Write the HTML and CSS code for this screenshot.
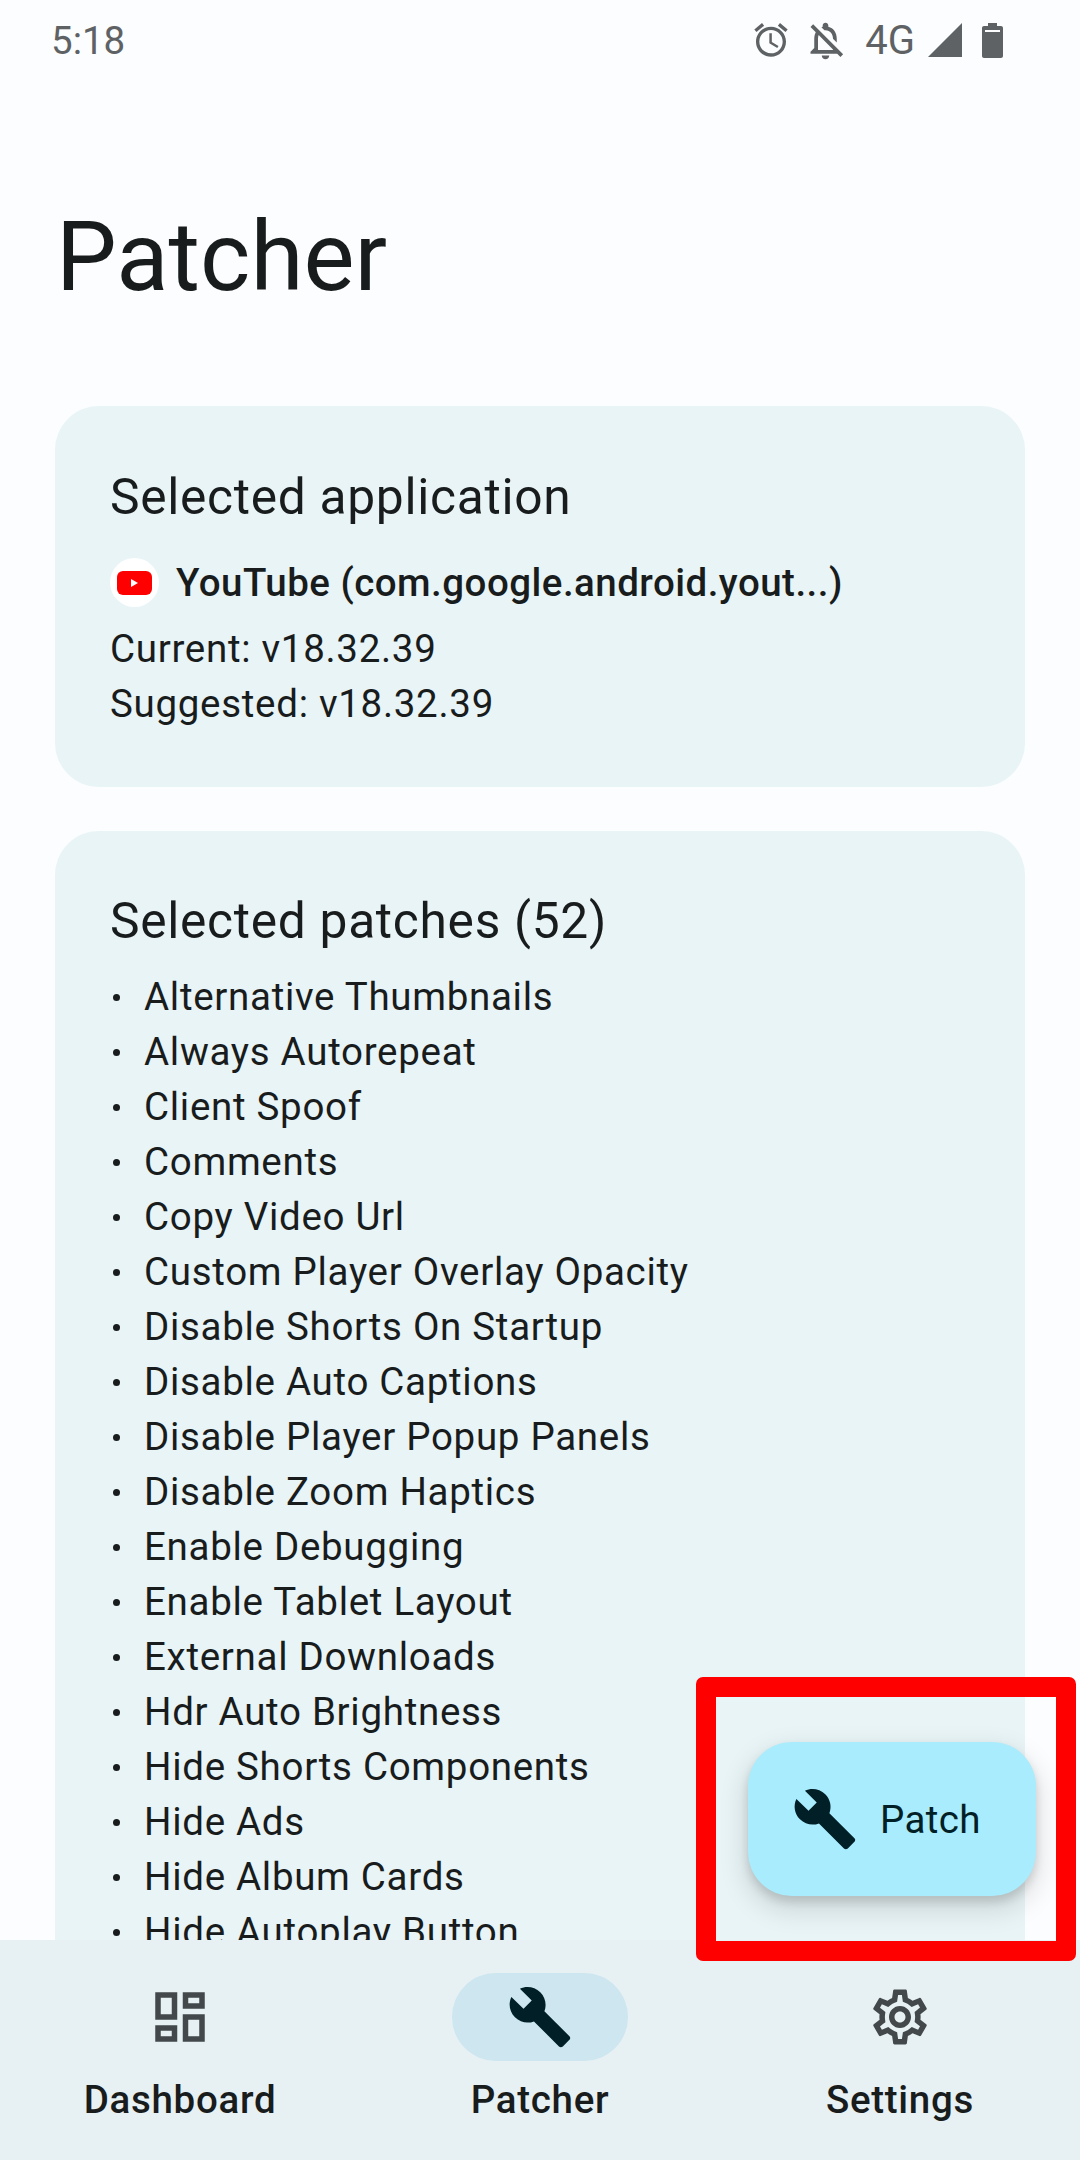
FILE: index.html
```html
<!DOCTYPE html>
<html lang="en">
  <head>
    <meta charset="UTF-8" />
    <meta name="viewport" content="width=device-width, initial-scale=1.0" />
    <title>Patcher</title>
    <link rel="stylesheet" href="styles.css">
  </head>
  <body>
    <div class="app">
      <div class="status-bar">
        <span class="time">5:18</span>
        <div class="status-icons">
          <svg class="icon-alarm" viewBox="0 0 24 24"><path d="M22 5.72l-4.6-3.86-1.29 1.53 4.6 3.86L22 5.72zM7.88 3.39L6.6 1.86 2 5.71l1.29 1.53 4.59-3.85zM12.5 8H11v6l4.75 2.85.75-1.23-4-2.37V8zM12 4c-4.97 0-9 4.03-9 9s4.03 9 9 9 9-4.03 9-9-4.03-9-9-9zm0 16c-3.87 0-7-3.13-7-7s3.13-7 7-7 7 3.13 7 7-3.13 7-7 7z"/></svg>
          <svg class="icon-bell" viewBox="0 0 24 24"><path d="M12 22c1.1 0 2-.9 2-2h-4c0 1.1.9 2 2 2zm0-15.5c2.49 0 4 2.02 4 4.5v.1l2 2V11c0-3.07-1.63-5.64-4.5-6.32V4c0-.83-.67-1.5-1.5-1.5s-1.5.67-1.5 1.5v.68c-.24.06-.47.15-.69.23l1.64 1.64c.18-.02.36-.05.55-.05zM5.41 3.35L4 4.76l2.81 2.81C6.29 8.57 6 9.74 6 11v5l-2 2v1h14.24l1.74 1.74 1.41-1.41L5.41 3.35zM16 17H8v-6c0-.68.12-1.32.34-1.9L16 16.76V17z"/></svg>
          <span class="network">4G</span>
          <svg class="icon-signal" viewBox="0 0 24 24"><path d="M0 24h24V0z"/></svg>
          <svg class="icon-battery" viewBox="0 0 21 35"><path d="M6 0h9v3h4c1.1 0 2 .9 2 2v28c0 1.1-.9 2-2 2H2c-1.100 0-2-.9-2-2V5c0-1.100.9-2 2-2h4z"/><rect class="battery-mark" x="3" y="7" width="15" height="2"/></svg>
        </div>
      </div>

      <main class="content">
        <h1>Patcher</h1>

        <section class="card card-app">
          <h2>Selected application</h2>
          <div class="app-row">
            <span class="app-icon">
              <svg viewBox="0 0 35 24"><rect width="35" height="24" rx="6" fill="#f00"/><path d="M14 8l7 4-7 4z" fill="#fff"/></svg>
            </span>
            <span class="app-name">YouTube (com.google.android.yout...)</span>
          </div>
          <p>Current: v18.32.39</p>
          <p>Suggested: v18.32.39</p>
        </section>

        <section class="card card-patches">
          <h2>Selected patches (52)</h2>
          <ul class="patch-list">
            <li>Alternative Thumbnails</li>
            <li>Always Autorepeat</li>
            <li>Client Spoof</li>
            <li>Comments</li>
            <li>Copy Video Url</li>
            <li>Custom Player Overlay Opacity</li>
            <li>Disable Shorts On Startup</li>
            <li>Disable Auto Captions</li>
            <li>Disable Player Popup Panels</li>
            <li>Disable Zoom Haptics</li>
            <li>Enable Debugging</li>
            <li>Enable Tablet Layout</li>
            <li>External Downloads</li>
            <li>Hdr Auto Brightness</li>
            <li>Hide Shorts Components</li>
            <li>Hide Ads</li>
            <li>Hide Album Cards</li>
            <li>Hide Autoplay Button</li>
          </ul>
        </section>
      </main>

      <nav class="bottom-nav">
        <div class="nav-item">
          <span class="nav-icon">
            <svg viewBox="0 0 24 24"><path d="M19 5v2h-4V5h4M9 5v6H5V5h4m10 8v6h-4v-6h4M9 17v2H5v-2h4M21 3h-8v6h8V3zM11 3H3v10h8V3zm10 8h-8v10h8V11zm-10 4H3v6h8v-6z"/></svg>
          </span>
          <span class="nav-label">Dashboard</span>
        </div>
        <div class="nav-item active">
          <span class="nav-icon">
            <svg viewBox="0 0 24 24"><path d="M22.700 19l-9.100-9.100c.9-2.300.4-5-1.500-6.900-2-2-5-2.400-7.400-1.300L9 6 6 9 1.600 4.700C.4 7.100.9 10.100 2.900 12.100c1.900 1.900 4.600 2.400 6.900 1.500l9.100 9.100c.4.4 1 .4 1.400 0l2.300-2.300c.5-.4.5-1.100.1-1.400z"/></svg>
          </span>
          <span class="nav-label">Patcher</span>
        </div>
        <div class="nav-item">
          <span class="nav-icon">
            <svg viewBox="0 0 24 24"><path d="M19.430 12.980c.04-.32.07-.64.07-.98 0-.34-.03-.66-.07-.98l2.110-1.650c.19-.15.24-.42.12-.64l-2-3.460c-.09-.16-.26-.25-.44-.25-.06 0-.12.01-.17.03l-2.490 1c-.52-.4-1.080-.73-1.690-.98l-.38-2.650C14.460 2.180 14.250 2 14 2h-4c-.25 0-.46.18-.49.42l-.38 2.650c-.61.25-1.170.59-1.690.98l-2.490-1c-.06-.02-.12-.03-.18-.03-.17 0-.34.09-.43.25l-2 3.460c-.13.22-.07.49.12.64l2.110 1.650c-.04.32-.07.65-.07.98 0 .33.03.66.07.98l-2.110 1.650c-.19.15-.24.42-.12.64l2 3.460c.09.16.26.25.44.25.06 0 .12-.01.17-.03l2.490-1c.52.4 1.080.73 1.690.98l.38 2.650c.03.24.24.42.49.42h4c.25 0 .46-.18.49-.42l.38-2.650c.61-.25 1.170-.59 1.690-.98l2.490 1c.06.02.12.03.18.03.17 0 .34-.09.43-.25l2-3.460c.12-.22.07-.49-.12-.64l-2.110-1.650zm-1.980-1.710c.04.31.05.52.05.73 0 .21-.02.43-.05.73l-.14 1.130.89.7 1.080.84-.7 1.210-1.270-.51-1.040-.42-.9.68c-.43.32-.84.56-1.250.73l-1.060.43-.16 1.130-.2 1.350h-1.400l-.19-1.350-.16-1.130-1.060-.43c-.43-.18-.83-.41-1.230-.71l-.91-.7-1.060.43-1.270.51-.7-1.210 1.080-.84.89-.7-.14-1.130c-.03-.31-.05-.54-.05-.74s.02-.43.05-.73l.14-1.130-.89-.7-1.080-.84.7-1.210 1.270.51 1.040.42.9-.68c.43-.32.84-.56 1.250-.73l1.060-.43.16-1.130.2-1.350h1.390l.19 1.350.16 1.130 1.060.43c.43.18.83.41 1.230.71l.91.7 1.060-.43 1.270-.51.7 1.210-1.070.85-.89.7.14 1.130zM12 8c-2.210 0-4 1.790-4 4s1.790 4 4 4 4-1.790 4-4-1.790-4-4-4zm0 6c-1.100 0-2-.9-2-2s.9-2 2-2 2 .9 2 2-.9 2-2 2z"/></svg>
          </span>
          <span class="nav-label">Settings</span>
        </div>
      </nav>

      <button class="fab">
        <svg viewBox="0 0 24 24"><path d="M22.700 19l-9.100-9.100c.9-2.300.4-5-1.500-6.900-2-2-5-2.400-7.400-1.300L9 6 6 9 1.600 4.700C.4 7.100.9 10.100 2.900 12.100c1.900 1.900 4.600 2.400 6.900 1.500l9.100 9.100c.4.4 1 .4 1.400 0l2.300-2.300c.5-.4.5-1.100.1-1.400z"/></svg>
        <span>Patch</span>
      </button>
      <div class="highlight-box"></div>
    </div>
  </body>
</html>
```

FILE: styles.css
```css
body {
  margin: 0;
  font-family: Roboto, "Liberation Sans", sans-serif;
  color: #191c1d;
  background-color: #fbfdfe;
}
.app {
  position: relative;
  display: flex;
  flex-direction: column;
  width: 1080px;
  height: 2160px;
  overflow: hidden;
}
.status-bar {
  display: flex;
  justify-content: space-between;
  align-items: center;
  height: 80px;
  padding: 0 77px 0 51px;
  color: #5f6264;
  flex-shrink: 0;
}
.time {
  font-size: 38.500px;
}
.status-icons {
  display: flex;
  align-items: center;
  color: #5f6264;
}
.status-icons svg {
  fill: currentColor;
  display: block;
}
.icon-alarm {
  width: 40px;
  height: 40px;
}
.icon-bell {
  width: 45px;
  height: 45px;
  margin-left: 12px;
}
.network {
  font-size: 40px;
  font-weight: 400;
  margin-left: 17px;
}
.icon-signal {
  width: 34px;
  height: 34px;
  margin-left: 13px;
}
.icon-battery {
  width: 21px;
  height: 35px;
  margin-left: 20px;
}
.battery-mark {
  fill: #fbfdfe;
}
.content {
  flex: 1;
  min-height: 0;
  overflow: hidden;
  padding: 0 55px;
}
h1 {
  font-size: 96.250px;
  font-weight: 400;
  line-height: 110px;
  margin: 122px 0 0 1px;
}
.card {
  background-color: #e8f4f6;
  border-radius: 44px;
  padding: 55px;
  letter-spacing: 0.7px;
}
.card-app {
  margin-top: 94px;
  height: 381px;
  box-sizing: border-box;
  padding-top: 60px;
}
.card-patches {
  margin-top: 44px;
  padding-top: 60px;
}
h2 {
  font-size: 49.700px;
  font-weight: 400;
  line-height: 60px;
  margin: 0;
}
.card-app h2 {
  position: relative;
  top: 1px;
}
p {
  font-size: 38.500px;
  line-height: 55px;
  margin: 0;
}
.app-row {
  display: flex;
  align-items: center;
  gap: 17px;
  margin: 29px 0 0;
  height: 55px;
}
.app-icon {
  display: flex;
  align-items: center;
  justify-content: center;
  width: 49px;
  height: 49px;
  border-radius: 50%;
  background-color: #fff;
}
.app-icon svg {
  width: 35px;
  height: 24px;
}
.app-name {
  font-size: 38.500px;
  font-weight: 500;
  letter-spacing: 0.47px;
}
.app-row + p {
  margin-top: 11px;
}
.patch-list {
  list-style: none;
  margin: 18px 0 0;
  padding: 0;
}
.patch-list li {
  position: relative;
  font-size: 38.500px;
  line-height: 55px;
  padding-left: 34px;
}
.patch-list li::before {
  content: "";
  position: absolute;
  left: 3px;
  top: 25px;
  width: 7px;
  height: 7px;
  border-radius: 50%;
  background-color: #191c1d;
}
.bottom-nav {
  display: flex;
  height: 220px;
  flex-shrink: 0;
  background-color: #e7f0f3;
  position: relative;
}
.nav-item {
  flex: 1;
  display: flex;
  flex-direction: column;
  align-items: center;
  padding-top: 33px;
}
.nav-icon {
  display: flex;
  align-items: center;
  justify-content: center;
  width: 176px;
  height: 88px;
  border-radius: 44px;
}
.nav-icon svg {
  width: 66px;
  height: 66px;
  fill: #43484a;
}
.active .nav-icon {
  background-color: #cde6ef;
}
.active .nav-icon svg {
  fill: #001f27;
}
.nav-label {
  font-size: 38.500px;
  font-weight: 500;
  letter-spacing: 0.7px;
  line-height: 55px;
  margin-top: 11px;
}
.fab {
  position: absolute;
  left: 748px;
  top: 1742px;
  display: flex;
  align-items: center;
  gap: 22px;
  width: 288px;
  height: 154px;
  padding: 0 0 0 44px;
  border: none;
  border-radius: 44px;
  background-color: #a9ecfd;
  color: #001f27;
  font-family: inherit;
  font-size: 38.500px;
  font-weight: 400;
  letter-spacing: 0.4px;
  box-shadow: 0 6px 10px rgba(0, 0, 0, 0.14), 0 11px 24px 6px rgba(0, 0, 0, 0.1);
}
.fab svg {
  width: 66px;
  height: 66px;
  fill: #001f27;
}
.highlight-box {
  position: absolute;
  left: 696px;
  top: 1677px;
  width: 340px;
  height: 244px;
  border: 20px solid #f00;
  border-radius: 7px;
}
```
